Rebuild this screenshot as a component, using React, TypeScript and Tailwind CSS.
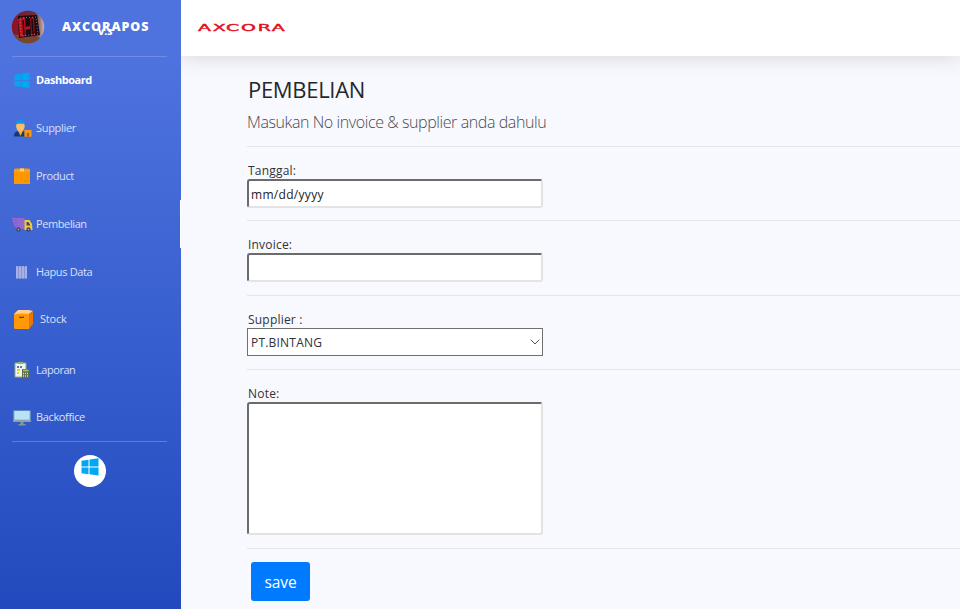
import React from "react";

function WindowsIcon({ className }: { className: string }) {
  return (
    <svg viewBox="0 0 18 18" className={className} fill="#00a8f3">
      <path d="M0.5 2.7 7.5 1.7V8.4H0.5zM8.5 1.5 17.5 0.2V8.4H8.5zM0.5 9.4H7.5V16.2L0.5 15.2zM8.5 9.4H17.5V17.6L8.5 16.3z" />
    </svg>
  );
}

function SupplierIcon() {
  return (
    <svg viewBox="0 0 20 20" className="-ml-px h-[19px] w-[19px] shrink-0">
      <path d="M1 18.5c0-4 2-5.5 5-6h3c3 .5 5 2 5 6z" fill="#123a73" />
      <path d="M4.500 11h6.500L8 18z" fill="#f2a54a" />
      <ellipse cx="7.800" cy="7.600" rx="4.500" ry="5.500" fill="#f8bd68" />
      <path d="M2.700 6C2.500 2.500 4.500 1 7.800 1s5.200 1.500 5 5L12 5H4z" fill="#1692e8" />
      <rect x="12" y="11.500" width="7.500" height="7.200" fill="#f59a12" />
      <path d="M14.500 14.500H17v4.200h-2.500z" fill="#b85b13" />
    </svg>
  );
}

function ProductIcon() {
  return (
    <svg viewBox="0 0 16 16" className="h-4 w-4">
      <path d="M0 1.500 1.500.5h13L16 1.500V16H0z" fill="#ff9800" />
      <path d="M0 1.500h16V4H0z" fill="#f5a11b" />
      <path d="M6 .5h4V4L8 3 6 4z" fill="#ffd16f" />
      <path d="M10.500 13h1m1.500 0h1" stroke="#b96b00" />
    </svg>
  );
}

function TruckIcon() {
  return (
    <svg viewBox="0 0 21 14" className="-ml-0.5 h-3.5 w-[21px] shrink-0">
      <path d="M0 0h12.500v11H4V9H2V6H1V3H0z" fill="#9169cf" />
      <path d="M0 2h5M1 5h4M2 8h4" stroke="#7560d2" />
      <path d="M12.500 2H17.500l2.500 4 .5 6h-8z" fill="#f9c92f" />
      <path d="M14.500 4h2l2 3.500h-4z" fill="#3e4b68" />
      <circle cx="6.500" cy="11.500" r="2.200" fill="#40486b" />
      <circle cx="16.500" cy="11.500" r="2.200" fill="#40486b" />
      <circle cx="6.500" cy="11.500" r=".8" fill="#aab" />
      <circle cx="16.500" cy="11.500" r=".8" fill="#aab" />
    </svg>
  );
}

function BarsIcon() {
  return (
    <svg viewBox="0 0 11 13" className="h-[13px] w-[11px]">
      <path d="M0 .5h11v12H0z" fill="#8597dc" />
      <path d="M1 0v12.500M4 0v12.500M7 0v12.500M10 0v12.500" stroke="#b5bce4" strokeWidth="1.400" />
    </svg>
  );
}

function StockIcon() {
  return (
    <svg viewBox="0 0 19 19" className="h-[19px] w-[19px]">
      <path d="M0 4 4 0h11l4 1-4 3z" fill="#ffcf91" />
      <path d="M0 4q7-1 15 0v15H1.500Q0 19 0 17.500z" fill="#ff9907" />
      <path d="m15 4 4-3v13l-4 5z" fill="#e87504" />
      <path d="M5 7q2.500 1 5 0" fill="none" stroke="#643b18" strokeWidth="1.100" />
    </svg>
  );
}

function ReportIcon() {
  return (
    <svg viewBox="0 0 16 18" className="h-[18px] w-4">
      <path d="M1 2h11v14H1z" fill="#f0f5ef" stroke="#94ad77" />
      <path d="M4 .8h5V3H4z" fill="#8bb36b" />
      <path d="M3 6h2m1 0h2" stroke="#304d8b" strokeWidth="1.500" />
      <path d="M3 9h3M3 12h2" stroke="#d3d82b" strokeWidth="2" />
      <rect x="8" y="8" width="7.500" height="9.500" fill="#626b56" />
      <path d="M9 9.500h5.500" stroke="#a2cf62" strokeWidth="1.500" />
      <path d="M9 12.500h1m1 0h1m1 0h1M9 15h1m1 0h1m1 0h1" stroke="#e0d7cc" strokeWidth="1.300" />
    </svg>
  );
}

function MonitorIcon() {
  return (
    <svg viewBox="0 0 18 16" className="-ml-px h-4 w-[18px]">
      <path d="M.5.5h17v11H.5z" fill="#90b5cb" />
      <path d="M1.500 1h15v8.500h-15z" fill="#b9e1f7" />
      <path d="M0 10h18v1.800H0z" fill="#92a4a5" />
      <path d="M7.500 12h3v2h2v1.500h-7V14h2z" fill="#849894" />
    </svg>
  );
}

function Avatar() {
  return (
    <svg viewBox="0 0 34 34" className="-ml-px h-[34px] w-[34px]">
      <defs>
        <clipPath id="avatarCircle"><circle cx="17" cy="17" r="16.200" /></clipPath>
        <linearGradient id="avatarTone">
          <stop stopColor="#901020" /><stop offset=".7" stopColor="#65313a" /><stop offset="1" stopColor="#d2c2b8" />
        </linearGradient>
      </defs>
      <g clipPath="url(#avatarCircle)">
        <path d="M0 0h34v34H0z" fill="url(#avatarTone)" />
        <path d="M0 24 34 28v6H0z" fill="#79462e" />
        <path d="m7 6 19-1 3 20-21 3z" fill="#150d13" />
        <path d="m7 9 7-2 1 19-6 1z" fill="#c50c1c" />
        <path d="m19 8 4-1 1 18-4 1z" fill="#8d0b15" />
        <path d="m14 17 5-1v3l-5 1z" fill="#b81320" />
        <path d="m9 8 16-1 2 17-17 2z" fill="none" stroke="#b9a29b" strokeWidth=".7" strokeDasharray="1 2" />
        <path d="m12 10 1 15m8-16 1 15" stroke="#240810" strokeWidth="1.500" />
      </g>
    </svg>
  );
}

const navItems = [
  { label: "Dashboard", icon: <WindowsIcon className="h-[17px] w-[17px]" />, row: "h-12", iconBox: "w-4 justify-center", text: "ml-1.5 font-bold text-white tracking-[-0.45px]" },
  { label: "Supplier", icon: <SupplierIcon />, row: "h-12", iconBox: "w-[18px] pt-px", text: "ml-1 tracking-[-0.3px]" },
  { label: "Product", icon: <ProductIcon />, row: "h-12", iconBox: "w-[18px]", text: "ml-1 tracking-[-0.36px]" },
  { label: "Pembelian", icon: <TruckIcon />, row: "h-12", iconBox: "w-[18px] pt-px", text: "ml-1 tracking-[-0.4px]" },
  { label: "Hapus Data", icon: <BarsIcon />, row: "h-12", iconBox: "w-[18px] pl-[2px] pt-px", text: "ml-1 tracking-[-0.36px]" },
  { label: "Stock", icon: <StockIcon />, row: "h-[47px]", iconBox: "w-[19px]", text: "ml-[7px] tracking-[-0.2px]" },
  { label: "Laporan", icon: <ReportIcon />, row: "mt-[3px] h-12", iconBox: "w-[18px]", text: "ml-1 tracking-[-0.45px]" },
  { label: "Backoffice", icon: <MonitorIcon />, row: "h-[47px] pb-px", iconBox: "w-[18px] pt-0.5", text: "ml-1 tracking-[-0.36px]" },
];

function Sidebar() {
  return (
    <aside className="relative z-10 h-full w-[181px] shrink-0 bg-linear-to-b from-[#4e73df] from-10% to-[#224abe] to-100%">
      <div className="mr-[14px] ml-3 flex h-[56.500px] items-center border-b border-[#6e8ce5] pb-px">
        <Avatar />
        <div className="relative ml-[17px] text-[12.500px] leading-4 font-extrabold tracking-[0.95px] text-white">
          AXCORAPOS
          <span className="absolute top-[7px] left-9 text-[9px] leading-3 tracking-[0.2px]">V.3</span>
        </div>
      </div>
      <nav className="-mt-[0.500px] pl-[14px]">
        {navItems.map((item) => (
          <a
            key={item.label}
            className={`flex items-center text-[11px] text-[#d9e1fa] ${item.row} ${item.label === "Pembelian" ? "border-r border-white" : ""}`}
          >
            <span className={`flex shrink-0 items-center ${item.iconBox}`}>{item.icon}</span>
            <span className={item.text}>{item.label}</span>
          </a>
        ))}
      </nav>
      <div className="mr-[14px] ml-3 flex justify-center border-t border-[#5d7ddd] pt-[13px]">
        <button className="flex h-8 w-8 justify-center rounded-full bg-white pt-[3px]">
          <WindowsIcon className="h-[18px] w-[18px]" />
        </button>
      </div>
    </aside>
  );
}

const fieldBox = "block w-[296px] rounded-[3px] border-2 border-t-[#6b6b6b] border-r-[#e3e3e3] border-b-[#e3e3e3] border-l-[#6b6b6b] bg-white outline-none";

function Field({ label, size, children }: { label: string; size: string; children: React.ReactNode }) {
  return (
    <div className={`border-t border-[#e3e5eb] pt-[15px] ${size}`}>
      <label className="block h-[17px] pl-px text-[12px] leading-[18px] tracking-[0.2px] text-[#303238]">{label}</label>
      {children}
    </div>
  );
}

export default function App() {
  return (
    <div className="flex h-[609px] w-[960px] overflow-hidden bg-[#f8f9fe] font-['Open_Sans','Noto_Sans',sans-serif]">
      <Sidebar />
      <div className="flex min-w-0 flex-1 flex-col">
        <header className="flex h-14 shrink-0 items-center bg-white pl-[17px] shadow-[0_2px_20px_rgba(58,59,69,0.17)]">
          <span className="origin-left scale-x-[2.1] font-['DejaVu_Sans'] text-[9px] leading-3 font-normal tracking-[0.85px] text-[#e30f1b] [-webkit-text-stroke:0.4px_#e30f1b]">AXCORA</span>
        </header>
        <main className="flex-1 pl-[66px]">
          <div className="h-[90px] pt-[17px]">
            <h1 className="pl-px text-[22px] leading-8 tracking-[-0.3px] text-[#25272c]">PEMBELIAN</h1>
            <p className="mt-1.5 text-[16px] leading-[22px] font-light tracking-[-0.41px] text-[#484a50]">Masukan No invoice &amp; supplier anda dahulu</p>
          </div>
          <Field label="Tanggal:" size="h-[74px]">
            <input className={`${fieldBox} h-[29px] pt-0.5 pl-0.5 text-[12px] tracking-[0.3px] text-[#222]`} defaultValue="mm/dd/yyyy" />
          </Field>
          <Field label="Invoice:" size="h-[75px]">
            <input className={`${fieldBox} h-[29px]`} />
          </Field>
          <Field label="Supplier :" size="h-[74px]">
            <button className="flex h-7 w-[296px] items-center justify-between border border-[#707070] bg-white pt-0.5 pr-0.5 pl-[3px] text-[12px] tracking-[0.2px] text-[#303238]">
              <span>PT.BINTANG</span>
              <svg viewBox="0 0 10 6" className="mb-0.5 h-1.5 w-2.5"><path d="m.7.7 4.300 4.300L9.300.7" fill="none" stroke="#555" /></svg>
            </button>
          </Field>
          <Field label="Note:" size="h-[179px]">
            <textarea className={`${fieldBox} h-[133px] resize-none`} />
          </Field>
          <div className="border-t border-[#e3e5eb] pt-[13px] pl-1">
            <button className="h-[39px] w-[59px] rounded-[3px] bg-[#007bff] pt-[3px] text-[15.500px] tracking-[-0.1px] text-white">save</button>
          </div>
        </main>
      </div>
    </div>
  );
}
